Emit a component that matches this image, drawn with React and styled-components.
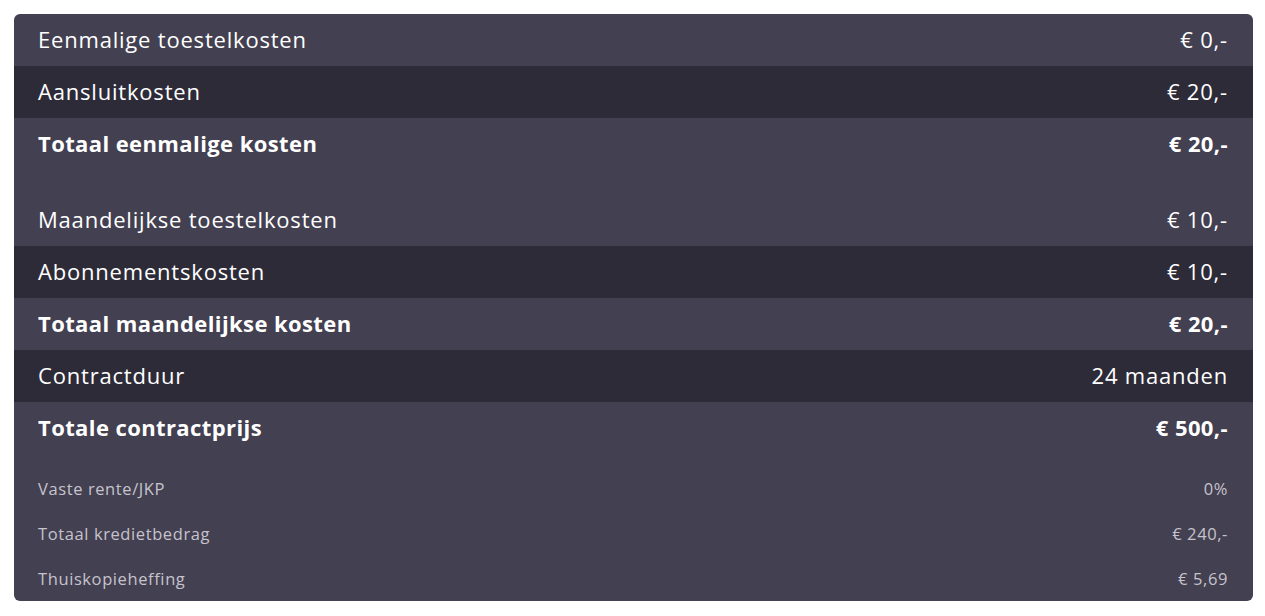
import React from "react";
import styled, { createGlobalStyle } from "styled-components";

const Global = createGlobalStyle`
  html, body { margin: 0; padding: 0; background: #ffffff; }
  body { font-family: "Open Sans", "Noto Sans", sans-serif; }
`;

const Page = styled.div`
  padding: 14px 12px 14px 14px;
`;

const Card = styled.div`
  background: #434051;
  border-radius: 6px;
  overflow: hidden;
  color: #ffffff;
`;

const Section = styled.div`
  padding: ${(p) => p.$pad || "0"};
`;

const Row = styled.div`
  display: flex;
  justify-content: space-between;
  align-items: center;
  height: 52px;
  padding: 0 25px 2px 24px;
  box-sizing: border-box;
  background: ${(p) => (p.$dark ? "#2e2b39" : "transparent")};
  font-size: 22px;
  font-weight: ${(p) => (p.$bold ? 700 : 400)};
  letter-spacing: ${(p) => (p.$bold ? "0.4px" : "0.8px")};
`;

const SmallRow = styled.div`
  display: flex;
  justify-content: space-between;
  align-items: center;
  height: 45px;
  padding: 0 25px 0 24px;
  font-size: 16.5px;
  letter-spacing: 0.6px;
  color: #c6c3cd;
`;

const once = [
  { l: "Eenmalige toestelkosten", v: "€ 0,-" },
  { l: "Aansluitkosten", v: "€ 20,-", dark: true },
  { l: "Totaal eenmalige kosten", v: "€ 20,-", bold: true },
];

const monthly = [
  { l: "Maandelijkse toestelkosten", v: "€ 10,-" },
  { l: "Abonnementskosten", v: "€ 10,-", dark: true },
  { l: "Totaal maandelijkse kosten", v: "€ 20,-", bold: true },
  { l: "Contractduur", v: "24 maanden", dark: true },
  { l: "Totale contractprijs", v: "€ 500,-", bold: true },
];

const small = [
  { l: "Vaste rente/JKP", v: "0%" },
  { l: "Totaal kredietbedrag", v: "€ 240,-" },
  { l: "Thuiskopieheffing", v: "€ 5,69" },
];

export default function App() {
  return (
    <Page>
      <Global />
      <Card>
        <Section $pad="0 0 24px">
          {once.map((r) => (
            <Row key={r.l} $dark={r.dark} $bold={r.bold}>
              <span>{r.l}</span>
              <span>{r.v}</span>
            </Row>
          ))}
        </Section>
        <Section $pad="0 0 12px">
          {monthly.map((r) => (
            <Row key={r.l} $dark={r.dark} $bold={r.bold}>
              <span>{r.l}</span>
              <span>{r.v}</span>
            </Row>
          ))}
        </Section>
        <Section>
          {small.map((r) => (
            <SmallRow key={r.l}>
              <span>{r.l}</span>
              <span>{r.v}</span>
            </SmallRow>
          ))}
        </Section>
      </Card>
    </Page>
  );
}
